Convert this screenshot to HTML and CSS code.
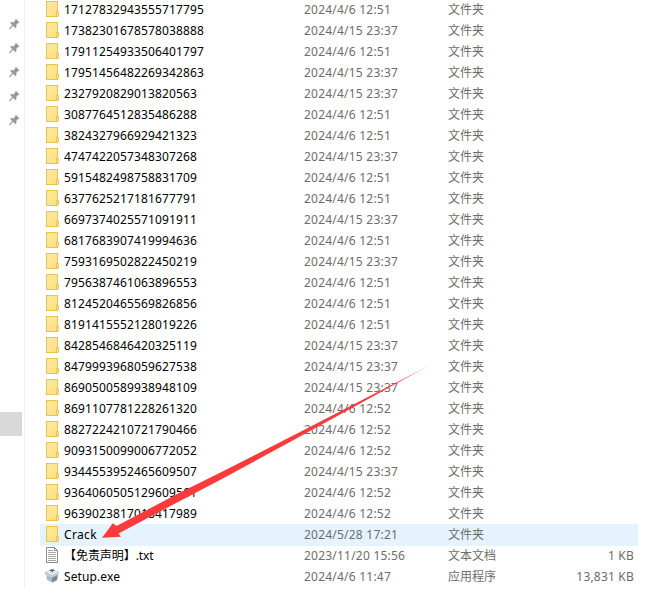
FILE: index.html
```html
<!DOCTYPE html>
<html lang="zh-CN">
<head>
<meta charset="utf-8">
<title>Files</title>
<link rel="stylesheet" href="styles.css">
</head>
<body>
<svg class="defs" width="0" height="0">
  <defs>
    <linearGradient id="paper" x1="0" y1="0" x2="1" y2="1"><stop offset="0" stop-color="#ffeaa2"/><stop offset="1" stop-color="#ffdf82"/></linearGradient>
    <symbol id="folder" viewBox="0 0 16 16">
      <rect x="2.5" y="0.5" width="11" height="15" fill="url(#paper)" stroke="#e9c54d"/>
      <path d="M12.4 15.5V10.4H14.4V15L13.8 15.5Z" fill="#ffe596" stroke="#e4bd42" stroke-width=".9"/>
    </symbol>
    <symbol id="pin" viewBox="0 0 11 11">
      <path d="M7 0L10.2 3.2L9.4 4L8.9 3.9L7 6.2L7.2 8.4L6.4 9L4.1 6.8L.9 10L.2 10.2L.3 9.4L3.3 6L1.3 4L2 3.2L4.2 3.4L6.5 1.5L6.3 .7Z" fill="#8f9aa3" stroke="#8f9aa3" stroke-width=".3"/>
    </symbol>
  </defs>
</svg>
<div class="explorer">
  <aside class="nav">
    <div class="pins">
      <svg><use href="#pin"/></svg><svg><use href="#pin"/></svg><svg><use href="#pin"/></svg><svg><use href="#pin"/></svg><svg><use href="#pin"/></svg>
    </div>
    <div class="current"></div>
  </aside>
  <main class="files">
    <div class="row"><svg class="icon"><use href="#folder"/></svg><span class="name">17127832943555717795</span><span class="date">2024/4/6 12:51</span><span class="type">文件夹</span><span class="size"></span></div>
    <div class="row"><svg class="icon"><use href="#folder"/></svg><span class="name">17382301678578038888</span><span class="date">2024/4/15 23:37</span><span class="type">文件夹</span><span class="size"></span></div>
    <div class="row"><svg class="icon"><use href="#folder"/></svg><span class="name">17911254933506401797</span><span class="date">2024/4/6 12:51</span><span class="type">文件夹</span><span class="size"></span></div>
    <div class="row"><svg class="icon"><use href="#folder"/></svg><span class="name">17951456482269342863</span><span class="date">2024/4/15 23:37</span><span class="type">文件夹</span><span class="size"></span></div>
    <div class="row"><svg class="icon"><use href="#folder"/></svg><span class="name">2327920829013820563</span><span class="date">2024/4/15 23:37</span><span class="type">文件夹</span><span class="size"></span></div>
    <div class="row"><svg class="icon"><use href="#folder"/></svg><span class="name">3087764512835486288</span><span class="date">2024/4/6 12:51</span><span class="type">文件夹</span><span class="size"></span></div>
    <div class="row"><svg class="icon"><use href="#folder"/></svg><span class="name">3824327966929421323</span><span class="date">2024/4/6 12:51</span><span class="type">文件夹</span><span class="size"></span></div>
    <div class="row"><svg class="icon"><use href="#folder"/></svg><span class="name">4747422057348307268</span><span class="date">2024/4/15 23:37</span><span class="type">文件夹</span><span class="size"></span></div>
    <div class="row"><svg class="icon"><use href="#folder"/></svg><span class="name">5915482498758831709</span><span class="date">2024/4/6 12:51</span><span class="type">文件夹</span><span class="size"></span></div>
    <div class="row"><svg class="icon"><use href="#folder"/></svg><span class="name">6377625217181677791</span><span class="date">2024/4/6 12:51</span><span class="type">文件夹</span><span class="size"></span></div>
    <div class="row"><svg class="icon"><use href="#folder"/></svg><span class="name">6697374025571091911</span><span class="date">2024/4/15 23:37</span><span class="type">文件夹</span><span class="size"></span></div>
    <div class="row"><svg class="icon"><use href="#folder"/></svg><span class="name">6817683907419994636</span><span class="date">2024/4/6 12:51</span><span class="type">文件夹</span><span class="size"></span></div>
    <div class="row"><svg class="icon"><use href="#folder"/></svg><span class="name">7593169502822450219</span><span class="date">2024/4/15 23:37</span><span class="type">文件夹</span><span class="size"></span></div>
    <div class="row"><svg class="icon"><use href="#folder"/></svg><span class="name">7956387461063896553</span><span class="date">2024/4/6 12:51</span><span class="type">文件夹</span><span class="size"></span></div>
    <div class="row"><svg class="icon"><use href="#folder"/></svg><span class="name">8124520465569826856</span><span class="date">2024/4/6 12:51</span><span class="type">文件夹</span><span class="size"></span></div>
    <div class="row"><svg class="icon"><use href="#folder"/></svg><span class="name">8191415552128019226</span><span class="date">2024/4/6 12:51</span><span class="type">文件夹</span><span class="size"></span></div>
    <div class="row"><svg class="icon"><use href="#folder"/></svg><span class="name">8428546846420325119</span><span class="date">2024/4/15 23:37</span><span class="type">文件夹</span><span class="size"></span></div>
    <div class="row"><svg class="icon"><use href="#folder"/></svg><span class="name">8479993968059627538</span><span class="date">2024/4/15 23:37</span><span class="type">文件夹</span><span class="size"></span></div>
    <div class="row"><svg class="icon"><use href="#folder"/></svg><span class="name">8690500589938948109</span><span class="date">2024/4/15 23:37</span><span class="type">文件夹</span><span class="size"></span></div>
    <div class="row"><svg class="icon"><use href="#folder"/></svg><span class="name">8691107781228261320</span><span class="date">2024/4/6 12:52</span><span class="type">文件夹</span><span class="size"></span></div>
    <div class="row"><svg class="icon"><use href="#folder"/></svg><span class="name">8827224210721790466</span><span class="date">2024/4/6 12:52</span><span class="type">文件夹</span><span class="size"></span></div>
    <div class="row"><svg class="icon"><use href="#folder"/></svg><span class="name">9093150099006772052</span><span class="date">2024/4/6 12:52</span><span class="type">文件夹</span><span class="size"></span></div>
    <div class="row"><svg class="icon"><use href="#folder"/></svg><span class="name">9344553952465609507</span><span class="date">2024/4/15 23:37</span><span class="type">文件夹</span><span class="size"></span></div>
    <div class="row"><svg class="icon"><use href="#folder"/></svg><span class="name">9364060505129609561</span><span class="date">2024/4/6 12:52</span><span class="type">文件夹</span><span class="size"></span></div>
    <div class="row"><svg class="icon"><use href="#folder"/></svg><span class="name">9639023817018417989</span><span class="date">2024/4/6 12:52</span><span class="type">文件夹</span><span class="size"></span></div>
    <div class="row hover"><svg class="icon"><use href="#folder"/></svg><span class="name crack">Crack</span><span class="date">2024/5/28 17:21</span><span class="type">文件夹</span><span class="size"></span></div>
    <div class="row"><svg class="icon" viewBox="0 0 16 16"><path d="M2.5 .5H10.5L13.5 3.5V15.5H2.5Z" fill="#fff" stroke="#8c8c8c"/><path d="M10.5 .5V3.5H13.5" fill="none" stroke="#8c8c8c"/><path d="M4 3.5H9M4 5.5H12M4 7.5H12M4 9.5H12M4 11.5H12M4 13.5H12" stroke="#a5a5a5"/></svg><span class="name cjk">【免责声明】.txt</span><span class="date">2023/11/20 15:56</span><span class="type">文本文档</span><span class="size">1 KB</span></div>
    <div class="row"><svg class="icon" viewBox="0 0 16 16"><path d="M2 6L8 8.5L14 5.5L13 12L8.3 14.6L3.2 12Z" fill="#a9b6c3"/><path d="M8 8.5L14 5.5L13 12L8.3 14.6Z" fill="#7b8997"/><path d="M.6 4.2L6 2L14 3L15 5.3L13 7.6L8 9.5L3 8L.6 6Z" fill="#c3cdd7"/><path d="M3 4.3L6.5 1.8L12.5 2.6L13.3 4.5L8 7.2Z" fill="#e4e9ee"/><path d="M5.8 3C7 1.3 9.4 1.4 10.4 2.8M8.2 1.8V4.2" fill="none" stroke="#3c454d" stroke-width="1.1"/></svg><span class="name setup">Setup.exe</span><span class="date">2024/4/6 11:47</span><span class="type">应用程序</span><span class="size">13,831 KB</span></div>
  </main>
  <svg class="arrow" viewBox="0 0 661 609">
    <defs><linearGradient id="fade" gradientUnits="userSpaceOnUse" x1="432" y1="364" x2="390" y2="387"><stop offset="0" stop-color="#fb3b3b" stop-opacity=".3"/><stop offset="1" stop-color="#fb3b3b"/></linearGradient></defs>
    <path d="M102 537.7L112.8 523.3L116.5 526L180 492.6L220 472.8L300 432L432 364L300 436.5L220 480L180 501L118.5 533.5L121 536.8Z" fill="url(#fade)"/>
  </svg>
</div>
</body>
</html>
```
FILE: styles.css
```css
body {
  margin: 0;
  background: #fff;
  font: 12px/22px "Noto Sans", "Noto Sans CJK SC", sans-serif;
  letter-spacing: 0.136px;
  color: #000;
}
.defs { position: absolute; }
.explorer {
  position: relative;
  display: flex;
  width: 661px;
  height: 609px;
  overflow: hidden;
}
.nav {
  box-sizing: border-box;
  width: 25px;
  height: 588px;
  border-right: 1px solid #f2f2f2;
}
.pins {
  display: flex;
  flex-direction: column;
  gap: 13px;
  height: 393px;
  padding: 19px 0 0 9px;
}
.pins svg { width: 11px; height: 11px; }
.current { width: 22px; height: 24px; background: #d9d9d9; }
.files { width: 598px; margin: -1px 0 0 15px; }
.row {
  display: grid;
  grid-template-columns: 16px 244px 144px 100px 86px;
  align-items: center;
  height: 22px;
  margin-bottom: -1px;
  padding-left: 4px;
  white-space: nowrap;
}
.row.hover { background: #e5f3ff; }
.icon { width: 16px; height: 16px; margin-top: -2px; }
.name { padding-left: 4px; }
.name.cjk { letter-spacing: -0.06px; }
.name.crack { letter-spacing: 0.35px; }
.name.setup { letter-spacing: 0.1px; }
.date, .type, .size { color: #6d6d6d; }
.date { letter-spacing: 0.22px; }
.type { letter-spacing: 0; }
.size { text-align: right; letter-spacing: 0.2px; }
.arrow {
  position: absolute;
  inset: 0;
  width: 661px;
  height: 609px;
  pointer-events: none;
}
```
